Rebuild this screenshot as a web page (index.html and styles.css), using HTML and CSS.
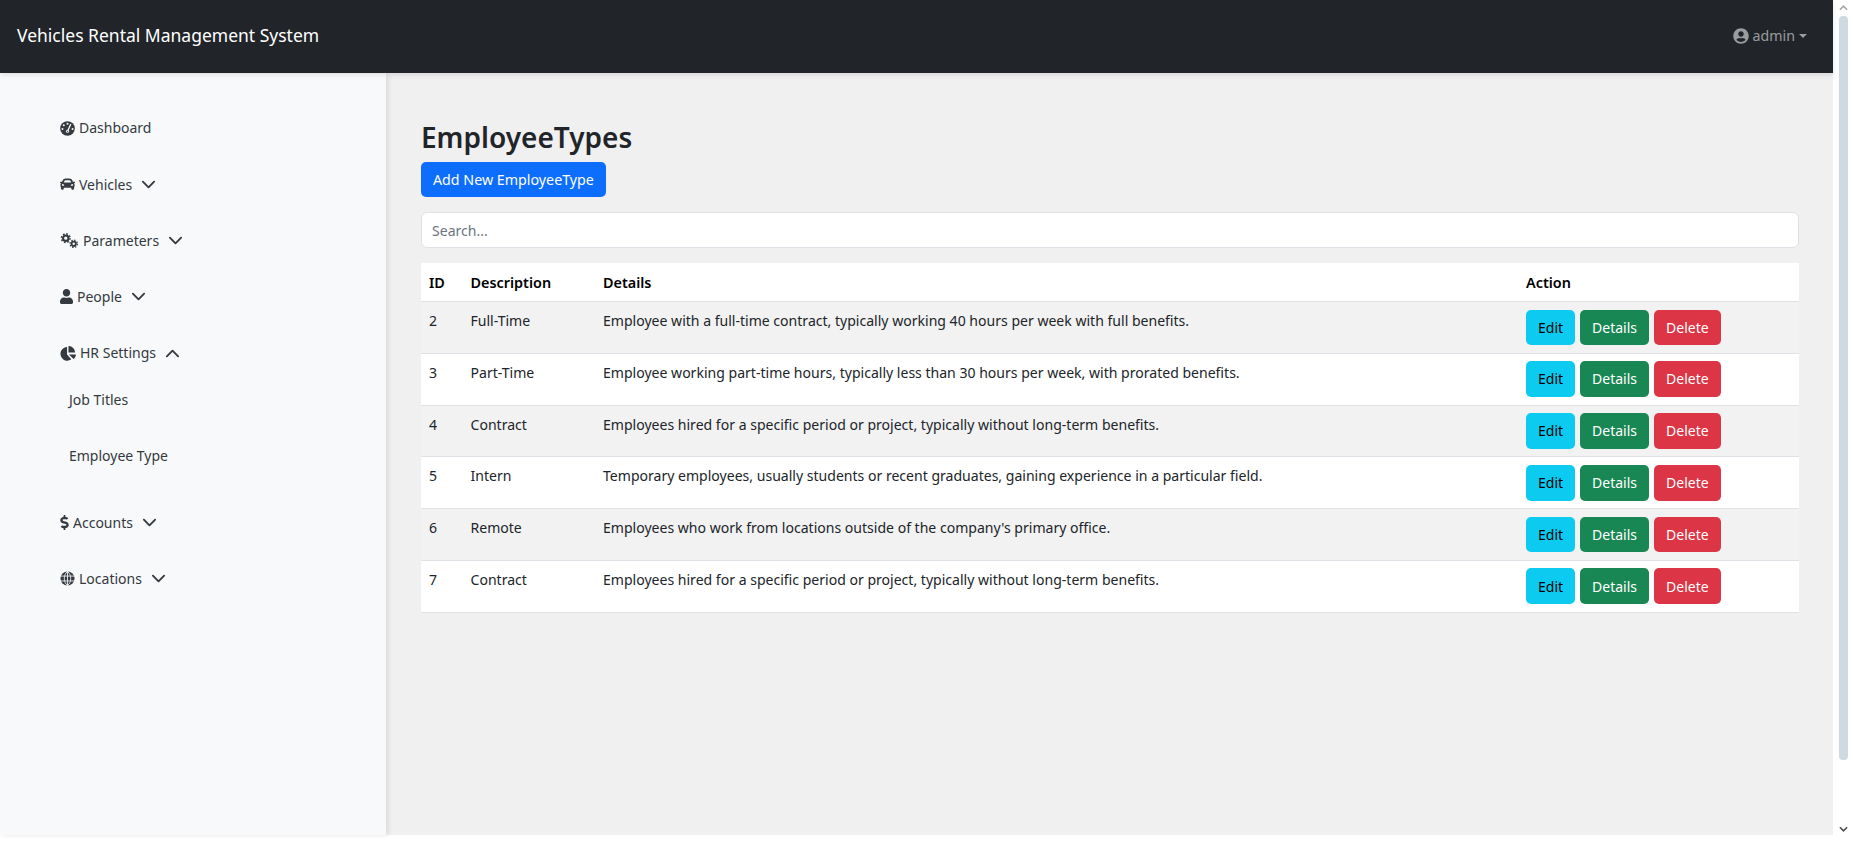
FILE: index.html
```html
<!DOCTYPE html>
<html lang="en">
<head>
    <meta charset="UTF-8">
    <meta name="viewport" content="width=device-width, initial-scale=1.0">
    <title>EmployeeTypes</title>
    <link rel="stylesheet" href="styles.css">
</head>
<body>
    <svg class="defs" aria-hidden="true">
        <symbol id="i-chev-down" viewBox="0 0 16 16"><path d="M2 5l6 6 6-6" fill="none" stroke="currentColor" stroke-width="2" stroke-linecap="round" stroke-linejoin="round"/></symbol>
        <symbol id="i-chev-up" viewBox="0 0 16 16"><path d="M2 11l6-6 6 6" fill="none" stroke="currentColor" stroke-width="2" stroke-linecap="round" stroke-linejoin="round"/></symbol>
    </svg>
    <div class="window">
        <div class="app">
            <header class="topbar">
                <span class="brand">Vehicles Rental Management System</span>
                <span class="user">
                    <svg class="user-icon" viewBox="0 0 496 512"><path fill="currentColor" d="M248 8C111 8 0 119 0 256s111 248 248 248 248-111 248-248S385 8 248 8zm0 96c48.6 0 88 39.4 88 88s-39.4 88-88 88-88-39.4-88-88 39.4-88 88-88zm0 344c-58.7 0-111.3-26.6-146.5-68.2 18.8-35.4 55.6-59.8 98.5-59.8 2.4 0 4.8.4 7.1 1.1 13 4.2 26.6 6.9 40.9 6.9 14.3 0 28-2.7 40.9-6.9 2.3-.7 4.7-1.1 7.1-1.1 42.9 0 79.7 24.4 98.5 59.8C359.3 421.4 306.7 448 248 448z"/></svg>
                    admin
                    <i class="caret"></i>
                </span>
            </header>
            <div class="body">
                <nav class="sidebar">
                    <ul class="menu">
                        <li class="menu-item">
                            <svg class="ico" viewBox="0 0 512 512">
                                <circle cx="256" cy="256" r="250" fill="currentColor"/>
                                <g fill="#f8f9fa">
                                    <circle cx="256" cy="96" r="34"/>
                                    <circle cx="130" cy="146" r="34"/>
                                    <circle cx="84" cy="272" r="34"/>
                                    <circle cx="428" cy="272" r="34"/>
                                    <circle cx="256" cy="352" r="52"/>
                                </g>
                                <path d="M256 352L362 120" stroke="#f8f9fa" stroke-width="46" stroke-linecap="round"/>
                                <circle cx="256" cy="352" r="22" fill="currentColor"/>
                            </svg>
                            <span>Dashboard</span>
                        </li>
                        <li class="menu-item">
                            <svg class="ico ico-car" viewBox="0 56 512 400"><path fill="currentColor" d="M499.99 176h-59.87l-16.64-41.6C406.38 91.63 365.57 64 319.5 64h-127c-46.06 0-86.88 27.63-103.99 70.4L71.87 176H12.01C4.2 176-1.53 183.34.37 190.91l6 24C7.7 220.25 12.5 224 18.01 224h20.07C24.65 235.73 16 252.78 16 272v48c0 16.12 6.16 30.67 16 41.93V416c0 17.67 14.33 32 32 32h32c17.67 0 32-14.33 32-32v-32h256v32c0 17.67 14.33 32 32 32h32c17.67 0 32-14.33 32-32v-54.07c9.84-11.25 16-25.8 16-41.93v-48c0-19.22-8.65-36.27-22.07-48H494c5.51 0 10.31-3.75 11.64-9.09l6-24c1.89-7.57-3.84-14.91-11.65-14.91zm-352.06-17.83c7.29-18.22 24.94-30.17 44.57-30.17h127c19.63 0 37.28 11.95 44.57 30.17L384 208H128l19.93-49.83zM96 319.8c-19.2 0-32-12.76-32-31.9S76.8 256 96 256s48 28.71 48 47.85-28.8 15.95-48 15.95zm320 0c-19.2 0-48 3.19-48-15.95S396.8 256 416 256s32 12.76 32 31.9-12.8 31.9-32 31.9z"/></svg>
                            <span>Vehicles</span>
                            <svg class="chev"><use href="#i-chev-down"/></svg>
                        </li>
                        <li class="menu-item">
                            <svg class="ico ico-cogs" viewBox="0 0 20 16">
                                <circle cx="6" cy="5.5" r="2.9" fill="none" stroke="currentColor" stroke-width="2.2"/>
                                <circle cx="6" cy="5.5" r="4.6" fill="none" stroke="currentColor" stroke-width="1.6" stroke-dasharray="1.8 1.8"/>
                                <circle cx="14.5" cy="11.5" r="2.3" fill="none" stroke="currentColor" stroke-width="2"/>
                                <circle cx="14.5" cy="11.5" r="3.9" fill="none" stroke="currentColor" stroke-width="1.4" stroke-dasharray="1.5 1.56"/>
                            </svg>
                            <span>Parameters</span>
                            <svg class="chev"><use href="#i-chev-down"/></svg>
                        </li>
                        <li class="menu-item">
                            <svg class="ico ico-user" viewBox="0 0 448 512"><path fill="currentColor" d="M224 256c70.7 0 128-57.3 128-128S294.7 0 224 0 96 57.3 96 128s57.3 128 128 128zm89.6 32h-16.7c-22.2 10.2-46.9 16-72.9 16s-50.6-5.8-72.9-16h-16.7C60.2 288 0 348.2 0 422.4V464c0 26.5 21.5 48 48 48h352c26.5 0 48-21.5 48-48v-41.6c0-74.2-60.2-134.4-134.4-134.4z"/></svg>
                            <span>People</span>
                            <svg class="chev"><use href="#i-chev-down"/></svg>
                        </li>
                        <li class="menu-item">
                            <svg class="ico ico-pie" viewBox="0 0 544 512"><path fill="currentColor" d="M527 288H304l148 148c6 6 15 6 21 1 36-34 61-81 68-133 1-9-5-16-14-16zM512 208C504 96 416 8 304 0c-9-1-16 6-16 15v209h209c9 0 16-7 15-16zM240 288V48c0-9-7-16-16-15C104 50 8 154 16 280c6 120 112 224 232 224 46 0 90-15 125-40 7-5 8-16 2-22z"/></svg>
                            <span>HR Settings</span>
                            <svg class="chev"><use href="#i-chev-up"/></svg>
                        </li>
                        <li class="submenu">
                            <a class="submenu-item">Job Titles</a>
                            <a class="submenu-item">Employee Type</a>
                        </li>
                        <li class="menu-item">
                            <svg class="ico ico-dollar" viewBox="0 0 288 512"><path fill="currentColor" d="M209.2 233.4l-108-31.6C88.7 198.2 80 186.5 80 173.5c0-16.3 13.2-29.5 29.5-29.5h66.3c12.2 0 24.2 3.7 34.2 10.5 6.1 4.1 14.3 3.1 19.5-2l34.8-34c7.1-6.9 6.1-18.4-1.8-24.5C238 74.8 207.4 64.1 176 64V16c0-8.8-7.2-16-16-16h-32c-8.8 0-16 7.2-16 16v48h-2.5C45.8 64-5.4 118.7.5 183.6c4.2 46.1 39.4 83.6 83.8 96.6l102.5 30c12.5 3.7 21.2 15.3 21.2 28.3 0 16.3-13.2 29.5-29.5 29.5h-66.3C100 368 88 364.3 78 357.5c-6.1-4.1-14.3-3.1-19.5 2l-34.8 34c-7.1 6.9-6.1 18.4 1.8 24.5 24.5 19.2 55.1 29.9 86.5 30v48c0 8.8 7.2 16 16 16h32c8.8 0 16-7.2 16-16v-48.2c46.6-.9 90.3-28.6 105.7-72.7 21.5-61.6-14.6-124.8-72.5-141.7z"/></svg>
                            <span>Accounts</span>
                            <svg class="chev"><use href="#i-chev-down"/></svg>
                        </li>
                        <li class="menu-item">
                            <svg class="ico" viewBox="0 0 16 16">
                                <circle cx="8" cy="8" r="7.5" fill="currentColor"/>
                                <path d="M0 5.4h16M0 10.6h16M8 0v16M8 .5C5.6 2.5 4.6 5 4.6 8s1 5.5 3.4 7.5M8 .5c2.4 2 3.4 4.5 3.4 7.5s-1 5.5-3.4 7.5" fill="none" stroke="#f8f9fa" stroke-width=".9"/>
                            </svg>
                            <span>Locations</span>
                            <svg class="chev"><use href="#i-chev-down"/></svg>
                        </li>
                    </ul>
                </nav>
                <main class="content">
                    <h2 class="title">EmployeeTypes</h2>
                    <button class="btn btn-primary">Add New EmployeeType</button>
                    <input class="search" type="text" placeholder="Search...">
                    <table class="grid">
                        <colgroup>
                            <col class="col-id">
                            <col class="col-desc">
                            <col class="col-details">
                            <col>
                        </colgroup>
                        <thead>
                            <tr><th>ID</th><th>Description</th><th>Details</th><th>Action</th></tr>
                        </thead>
                        <tbody>
                            <tr>
                                <td>2</td><td>Full-Time</td>
                                <td>Employee with a full-time contract, typically working 40 hours per week with full benefits.</td>
                                <td class="actions"><button class="btn btn-info">Edit</button><button class="btn btn-success">Details</button><button class="btn btn-danger">Delete</button></td>
                            </tr>
                            <tr>
                                <td>3</td><td>Part-Time</td>
                                <td>Employee working part-time hours, typically less than 30 hours per week, with prorated benefits.</td>
                                <td class="actions"><button class="btn btn-info">Edit</button><button class="btn btn-success">Details</button><button class="btn btn-danger">Delete</button></td>
                            </tr>
                            <tr>
                                <td>4</td><td>Contract</td>
                                <td>Employees hired for a specific period or project, typically without long-term benefits.</td>
                                <td class="actions"><button class="btn btn-info">Edit</button><button class="btn btn-success">Details</button><button class="btn btn-danger">Delete</button></td>
                            </tr>
                            <tr>
                                <td>5</td><td>Intern</td>
                                <td>Temporary employees, usually students or recent graduates, gaining experience in a particular field.</td>
                                <td class="actions"><button class="btn btn-info">Edit</button><button class="btn btn-success">Details</button><button class="btn btn-danger">Delete</button></td>
                            </tr>
                            <tr>
                                <td>6</td><td>Remote</td>
                                <td>Employees who work from locations outside of the company's primary office.</td>
                                <td class="actions"><button class="btn btn-info">Edit</button><button class="btn btn-success">Details</button><button class="btn btn-danger">Delete</button></td>
                            </tr>
                            <tr>
                                <td>7</td><td>Contract</td>
                                <td>Employees hired for a specific period or project, typically without long-term benefits.</td>
                                <td class="actions"><button class="btn btn-info">Edit</button><button class="btn btn-success">Details</button><button class="btn btn-danger">Delete</button></td>
                            </tr>
                        </tbody>
                    </table>
                </main>
            </div>
        </div>
        <div class="scrollbar">
            <svg class="arrow" viewBox="0 0 10 6"><path d="M1 5l4-4 4 4" fill="none" stroke="#a5a5a5" stroke-width="1.8"/></svg>
            <div class="thumb"></div>
            <svg class="arrow" viewBox="0 0 10 6"><path d="M1 1l4 4 4-4" fill="none" stroke="#505050" stroke-width="1.8"/></svg>
        </div>
    </div>
</body>
</html>
```

FILE: styles.css
```css
* {
    box-sizing: border-box;
}
html, body {
    margin: 0;
    height: 100%;
    overflow: hidden;
    background: #fff;
}
body {
    font-family: "Noto Sans", Arial, sans-serif;
    font-size: 14.05px;
    line-height: 21.6px;
    color: #212529;
}
.defs {
    display: none;
}
.window {
    display: flex;
    height: 100%;
}
.app {
    flex: 1;
    height: 835px;
    display: flex;
    flex-direction: column;
    min-width: 0;
}

/* top bar */
.topbar {
    height: 73px;
    flex: none;
    background: #212529;
    display: flex;
    align-items: center;
    justify-content: space-between;
    padding: 0 26px 2px 17px;
    box-shadow: 0 2px 5px rgba(0, 0, 0, 0.1);
    position: relative;
    z-index: 2;
}
.brand {
    color: #fff;
    font-size: 17.5px;
}
.user {
    color: rgba(255, 255, 255, 0.55);
    display: flex;
    align-items: center;
    font-size: 14.2px;
}
.user-icon {
    width: 16px;
    height: 16px;
    margin-right: 4px;
}
.caret {
    width: 0;
    height: 0;
    margin-left: 4px;
    border-top: 4px solid rgba(255, 255, 255, 0.55);
    border-left: 4px solid transparent;
    border-right: 4px solid transparent;
}

/* sidebar */
.body {
    flex: 1;
    display: flex;
    min-height: 0;
}
.sidebar {
    width: 386px;
    flex: none;
    background: #f8f9fa;
    box-shadow: 2px 0 5px rgba(0, 0, 0, 0.1);
    padding: 27px 0 0 60px;
    position: relative;
    z-index: 1;
    color: #343a40;
    font-size: 14px;
}
.menu {
    list-style: none;
    margin: 0;
    padding: 0;
}
.menu-item {
    height: 56.25px;
    display: flex;
    align-items: center;
}
.ico {
    width: 15px;
    height: 15px;
    margin-right: 4px;
    flex: none;
}
.ico-car {
    width: 15px;
    height: 12px;
}
.ico-cogs {
    width: 19px;
    margin-right: 4px;
}
.ico-user {
    width: 13px;
}
.ico-pie {
    width: 16px;
}
.ico-dollar {
    width: 9px;
}
.chev {
    width: 15px;
    height: 15px;
    margin-left: 9px;
    color: #343a40;
}
.submenu {
    margin: -9px 0 10px 9px;
}
.submenu-item {
    display: flex;
    align-items: center;
    height: 56px;
}

/* main column */
.content {
    flex: 1;
    min-width: 0;
    background: #f0f0f0;
    padding: 46px 34px 0 35px;
}
.title {
    margin: 0 0 7px;
    font-size: 28px;
    line-height: 36px;
    font-weight: 600;
}
.btn {
    font: inherit;
    height: 35px;
    padding: 0 11px;
    border: 1px solid transparent;
    border-radius: 5px;
    color: #fff;
    white-space: nowrap;
}
.btn-primary {
    background: #0d6efd;
    display: block;
    font-size: 14.25px;
}
.btn-info {
    background: #0dcaf0;
    color: #000;
}
.btn-success {
    background: #198754;
}
.btn-danger {
    background: #dc3545;
}
.search {
    display: block;
    width: 100%;
    height: 36px;
    margin: 15px 0;
    padding: 0 10px;
    font: inherit;
    background: #fff;
    border: 1px solid #dee2e6;
    border-radius: 6px;
    outline: none;
}
.search::placeholder {
    color: #6c757d;
}

/* table */
.grid {
    width: 100%;
    table-layout: fixed;
    border-collapse: collapse;
}
.col-id {
    width: 41.5px;
}
.col-desc {
    width: 132.5px;
}
.col-details {
    width: 923px;
}
.grid th {
    height: 38.5px;
    background: #fff;
    color: #000;
    text-align: left;
    font-size: 14.4px;
    font-weight: 600;
    padding: 2px 8px 0;
    border-bottom: 1px solid #dee2e6;
}
.grid td {
    padding: 8px 8px 7px;
    vertical-align: top;
    border-bottom: 1px solid #dee2e6;
    background: #fff;
}
.grid tbody tr:nth-child(odd) td {
    background: #f2f2f2;
}
.grid td.actions {
    padding: 7.5px 8px;
    white-space: nowrap;
    font-size: 0;
}
.actions .btn {
    height: 35.8px;
    margin-right: 5px;
    font-size: 14px;
    vertical-align: top;
}

/* browser scrollbar */
.scrollbar {
    width: 20px;
    flex: none;
    background: #fff;
    display: flex;
    flex-direction: column;
    align-items: center;
    padding: 5px 0 9px;
}
.arrow {
    width: 9px;
    height: 6px;
    flex: none;
}
.thumb {
    width: 9px;
    height: 744px;
    margin: 5px 0 auto;
    background: #cfd9e2;
    border-radius: 4px;
}
```
